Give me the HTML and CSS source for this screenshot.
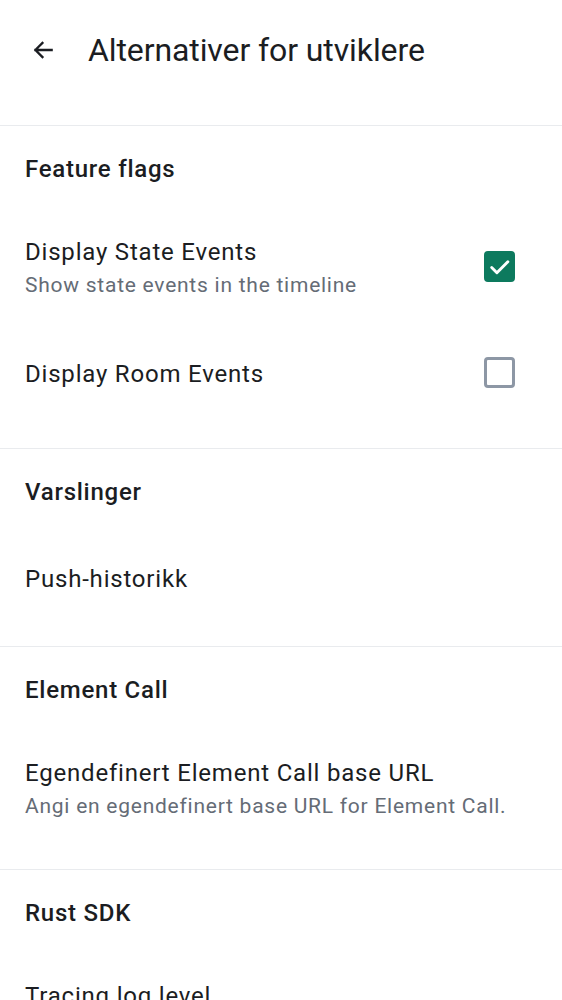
FILE: index.html
```html
<!DOCTYPE html>
<html lang="nb">
<head>
<meta charset="utf-8">
<link rel="stylesheet" href="styles.css">
</head>
<body>
<header class="topbar">
  <span class="back">
    <svg width="26" height="26" viewBox="0 0 24 24"><path d="M20 12H5M11.5 5.5L5 12l6.5 6.5" fill="none" stroke="#1b1d22" stroke-width="2.1" stroke-linecap="square"/></svg>
  </span>
  <h1 class="title">Alternativer for utviklere</h1>
</header>

<section class="section">
  <h2 class="section-title">Feature flags</h2>
  <div class="item check-item">
    <div class="text">
      <div class="item-title">Display State Events</div>
      <div class="item-sub">Show state events in the timeline</div>
    </div>
    <span class="checkbox checked">
      <svg width="26" height="26" viewBox="0 0 24 24"><path d="M4.5 12.5l5 5L20 7" fill="none" stroke="#fff" stroke-width="2.8" stroke-linecap="round" stroke-linejoin="round"/></svg>
    </span>
  </div>
  <div class="item check-item">
    <div class="text">
      <div class="item-title">Display Room Events</div>
    </div>
    <span class="checkbox"></span>
  </div>
</section>

<section class="section">
  <h2 class="section-title">Varslinger</h2>
  <div class="item">
    <div class="text">
      <div class="item-title">Push-historikk</div>
    </div>
  </div>
</section>

<section class="section">
  <h2 class="section-title">Element Call</h2>
  <div class="item">
    <div class="text">
      <div class="item-title">Egendefinert Element Call base URL</div>
      <div class="item-sub">Angi en egendefinert base URL for Element Call.</div>
    </div>
  </div>
</section>

<section class="section">
  <h2 class="section-title">Rust SDK</h2>
  <div class="item item-top">
    <div class="text">
      <div class="item-title">Tracing log level</div>
    </div>
  </div>
</section>
</body>
</html>
```

FILE: styles.css
```css
html, body {
  margin: 0;
  padding: 0;
  background: #ffffff;
}
body {
  font-family: Roboto, "Noto Sans", sans-serif;
  color: #1b1d22;
  width: 562px;
  height: 1000px;
  overflow: hidden;
}
.topbar {
  height: 100px;
  display: flex;
  align-items: center;
  padding-left: 30px;
  margin-bottom: 25px;
}
.back {
  width: 26px;
  height: 26px;
  display: flex;
  align-items: center;
  justify-content: center;
}
.back svg {
  display: block;
}
.title {
  margin: 0 0 0 32px;
  font-size: 32px;
  font-weight: 400;
  color: #1b1d22;
  letter-spacing: -0.1px;
}
.section {
  border-top: 1px solid #e9ebee;
  padding-bottom: 25px;
}
.section-title {
  margin: 0;
  height: 85px;
  display: flex;
  align-items: center;
  padding-left: 25px;
  font-size: 24px;
  font-weight: 500;
  letter-spacing: 0.75px;
  color: #1b1d22;
}
.item {
  display: flex;
  align-items: center;
  min-height: 87px;
  padding: 24px 47px 22px 25px;
  box-sizing: border-box;
}
.check-item {
  min-height: 100px;
}
.item-top {
  align-items: flex-start;
}
.text {
  flex: 1;
}
.item-title {
  font-size: 24px;
  line-height: 34px;
  letter-spacing: 0.8px;
  color: #1b1d22;
}
.item-sub {
  font-size: 21px;
  line-height: 32px;
  letter-spacing: 0.75px;
  color: #656c76;
}
.checkbox {
  width: 31px;
  height: 31px;
  margin-bottom: 3px;
  box-sizing: border-box;
  border: 3px solid #8d97a5;
  border-radius: 4px;
  display: flex;
  align-items: center;
  justify-content: center;
}
.checkbox.checked {
  background: #0d7a5e;
  border-color: #0d7a5e;
}
```
